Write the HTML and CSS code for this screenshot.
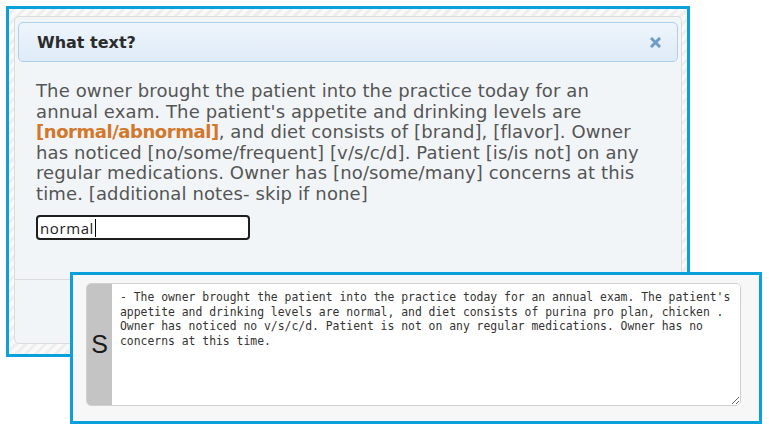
FILE: index.html
```html
<!DOCTYPE html>
<html lang="en">
<head>
  <meta charset="UTF-8" />
  <title>What text?</title>
  <link rel="stylesheet" href="styles.css">
</head>
<body>
  <div class="shot shot-dialog">
    <div class="dialog">
      <div class="dialog-title">
        <span>What text?</span>
        <svg class="close" width="11" height="11" viewBox="0 0 11 11">
          <path d="M2 2 L9 9 M9 2 L2 9" stroke="#6f9dc8" stroke-width="3" stroke-linecap="square" />
        </svg>
      </div>
      <div class="dialog-body">
        <p class="prompt">The owner brought the patient into the practice today for an<br>
        annual exam. The patient's appetite and drinking levels are<br>
        <b class="hl">[normal/abnormal]</b>, and diet consists of [brand], [flavor]. Owner<br>
        has noticed [no/some/frequent] [v/s/c/d]. Patient [is/is not] on any<br>
        regular medications. Owner has [no/some/many] concerns at this<br>
        time. [additional notes- skip if none]</p>
        <div class="answer">normal<span class="caret"></span></div>
      </div>
      <div class="dialog-buttons"></div>
    </div>
  </div>

  <div class="shot shot-note">
    <div class="note">
      <div class="note-label">S</div>
      <textarea class="note-text" spellcheck="false">- The owner brought the patient into the practice today for an annual exam. The patient's
appetite and drinking levels are normal, and diet consists of purina pro plan, chicken .
Owner has noticed no v/s/c/d. Patient is not on any regular medications. Owner has no
concerns at this time.</textarea>
    </div>
  </div>
</body>
</html>
```

FILE: styles.css
```css
body {
  margin: 0;
  background: #fff;
  font-family: "DejaVu Sans", Verdana, sans-serif;
}

.shot {
  box-sizing: border-box;
  border: 3px solid #0aa0dc;
}

/* first screenshot: jquery-ui style dialog */
.shot-dialog {
  width: 684px;
  height: 351px;
  margin: 6px 0 0 6px;
  padding: 7px 5px;
  background: repeating-linear-gradient(-45deg, #f9f9f9 0 4px, #eeeeee 4px 7px);
}

.dialog {
  box-sizing: border-box;
  height: 328px;
  padding: 5px 3px 0;
  background: #f2f5f8;
  border: 1px solid #dcdcdc;
  border-radius: 5px;
  display: flex;
  flex-direction: column;
}

.dialog-title {
  height: 40px;
  box-sizing: border-box;
  padding: 0 16px 0 18px;
  display: flex;
  align-items: center;
  justify-content: space-between;
  background: linear-gradient(#eef5fc, #dfebf7);
  border: 1px solid #acd0ee;
  border-radius: 5px;
  font-weight: bold;
  font-size: 16px;
  color: #2b2b2b;
}

.close {
  margin-top: 1px;
}

.dialog-body {
  padding: 19px 18px 0;
  flex: 1;
}

.prompt {
  margin: 0;
  font-size: 18px;
  line-height: 20.5px;
  letter-spacing: 0.12px;
  color: #555;
}

.hl {
  color: #d3772a;
  letter-spacing: -0.45px;
}

.answer {
  box-sizing: border-box;
  width: 214px;
  height: 25px;
  margin-top: 11px;
  padding: 2px 2px 0;
  background: #fff;
  border: 2px solid #1e1e1e;
  border-radius: 4px;
  font-family: "Open Sans", sans-serif;
  font-size: 15px;
  line-height: 18px;
  letter-spacing: 0.6px;
  color: #222;
}

.caret {
  display: inline-block;
  width: 1px;
  height: 18px;
  background: #000;
  vertical-align: top;
  margin-left: 1px;
}

.dialog-buttons {
  height: 63px;
  margin: 0 -3px;
  border-top: 1px solid #dcdcdc;
}

/* second screenshot: note field */
.shot-note {
  position: absolute;
  left: 70px;
  top: 272px;
  width: 692px;
  height: 152px;
  padding: 8px 0 0 13px;
  background: #f7f7f7;
}

.note {
  width: 653px;
  height: 121px;
  display: flex;
  border: 1px solid #cfcfcf;
  border-radius: 5px;
  overflow: hidden;
  background: #fff;
}

.note-label {
  width: 25px;
  background: #c4c4c4;
  display: flex;
  align-items: center;
  justify-content: center;
  font-family: "Liberation Sans", Arial, sans-serif;
  font-size: 25px;
  color: #1a1a1a;
}

.note-text {
  flex: 1;
  margin: 0;
  padding: 6px 8px;
  border: none;
  outline: none;
  resize: both;
  font-family: "DejaVu Sans Mono", monospace;
  font-size: 11.4px;
  line-height: 14.5px;
  color: #333;
  white-space: pre;
  overflow: hidden;
}
```
